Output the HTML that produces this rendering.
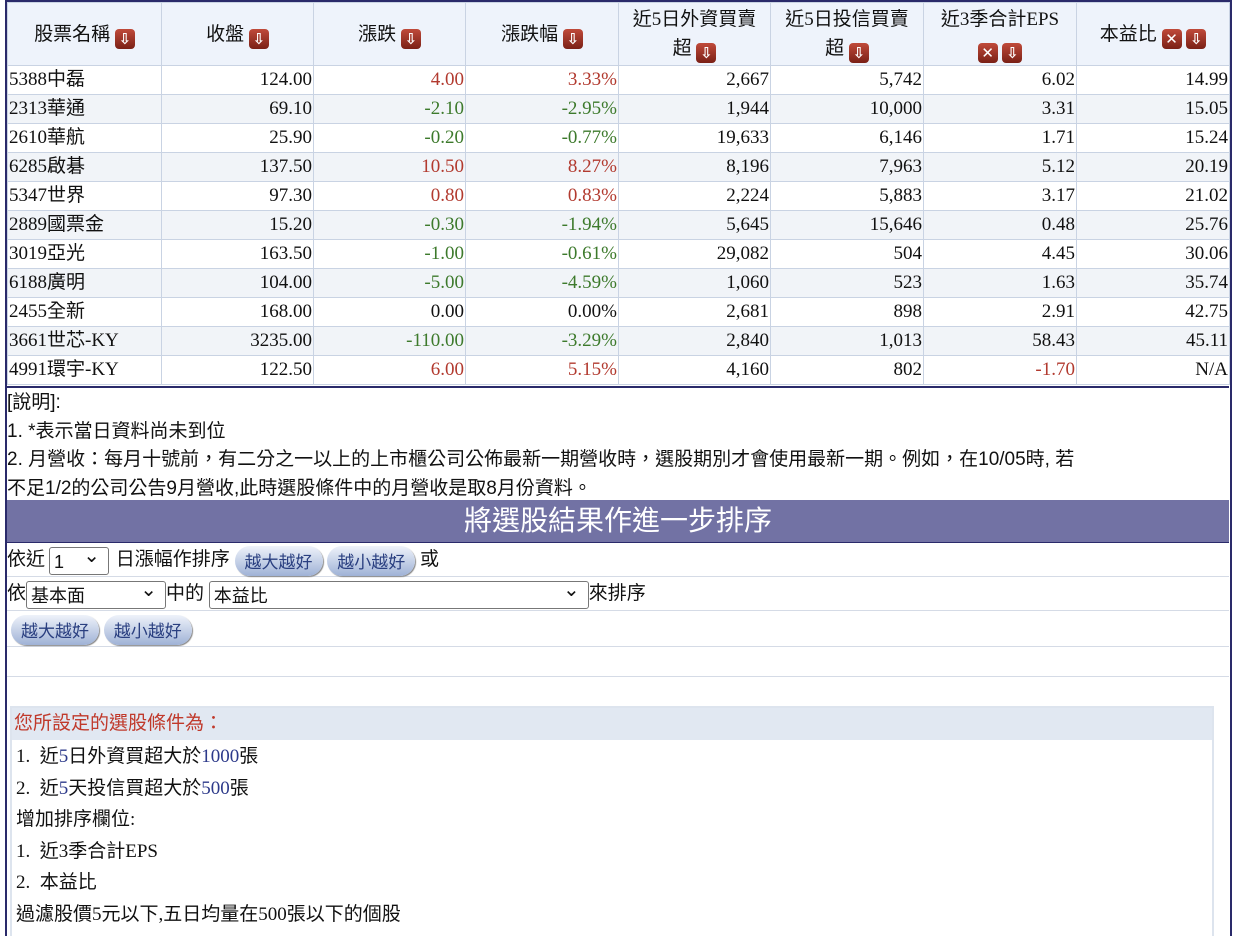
<!DOCTYPE html>
<html><head><meta charset="utf-8"><style>
body{margin:0;width:1234px;height:934px;overflow:hidden;background:#fff;font-family:"Liberation Serif","Noto Sans CJK TC",serif;font-size:18px;color:#111;}
.wrap{position:absolute;left:5px;top:0;width:1223px;height:934px;border-left:2px solid #2a2a6a;border-right:2px solid #2a2a6a;border-top:2px solid #2a2a6a;}
table.d{position:absolute;left:7px;top:2px;border-collapse:collapse;width:1222px;table-layout:fixed;}
table.d td{border:1px solid #c9d3e3;height:28px;padding:0 1px;text-align:right;white-space:nowrap;line-height:28px;font-size:19px;}
table.d th{font-weight:normal;background:#eef3fb;border:1px solid #c9d3e3;height:60px;text-align:center;line-height:29px;font-size:19px;}
table.d tr:nth-child(odd) td{background:#f1f4f8;}
table.d td.n{text-align:left;color:#111;}
.r{color:#b23a2f}.g{color:#3d7a2c}
.ic{display:inline-block;width:20px;height:20px;border-radius:4px;background:linear-gradient(#c04a3a,#7a2016);color:#fff;font-size:15px;line-height:20px;text-align:center;vertical-align:-4px;font-family:"DejaVu Sans",sans-serif;font-weight:bold;}
.line{position:absolute;left:7px;width:1222px;}
.bar{position:absolute;left:7px;top:500px;width:1222px;height:42px;background:#7272a4;color:#fff;text-align:center;font-size:28px;line-height:42px;font-family:"Liberation Sans","Noto Sans CJK TC",sans-serif;border-bottom:1px solid #2a2a6a;}
.row{position:absolute;left:7px;width:1222px;border-bottom:1px solid #d5dbe6;font-size:19px;}
.sel{display:inline-block;border:1px solid #777;border-radius:3px;height:28px;vertical-align:middle;background:#fff;font-family:"Liberation Sans","Noto Sans CJK TC",sans-serif;font-size:18px;line-height:28px;padding-left:4px;box-sizing:border-box;position:relative;}
.sel:after{content:"⌄";position:absolute;right:8px;top:-6px;font-size:20px;}
.btn{display:inline-block;height:30px;padding:0 10px;border-radius:15px;background:linear-gradient(#eef2fa,#9fb2d6);color:#2a3f80;font-size:17px;line-height:30px;vertical-align:middle;box-shadow:1px 1px 1px #888;font-family:"Noto Sans CJK TC",sans-serif;}
.cond{position:absolute;left:10px;top:706px;width:1200px;height:228px;border:2px solid #dde4ee;border-bottom:none;font-size:19px;}
.cond .h{background:#e1e8f2;height:32px;line-height:32px;color:#c0392b;padding-left:2px;}
.cond div.l{height:31.5px;line-height:33px;padding-left:4px;}
.b{color:#2d3a8a}
</style></head><body>
<div class="wrap"></div>
<table class="d">
<colgroup><col style="width:154px"><col style="width:152px"><col style="width:152px"><col style="width:153px"><col style="width:152px"><col style="width:153px"><col style="width:153px"><col style="width:153px"></colgroup>
<tr><th>股票名稱 <span class="ic">⇩</span></th><th>收盤 <span class="ic">⇩</span></th><th>漲跌 <span class="ic">⇩</span></th><th>漲跌幅 <span class="ic">⇩</span></th><th>近5日外資買賣<br>超 <span class="ic">⇩</span></th><th>近5日投信買賣<br>超 <span class="ic">⇩</span></th><th>近3季合計EPS<br><span class="ic">✕</span> <span class="ic">⇩</span></th><th>本益比 <span class="ic">✕</span> <span class="ic">⇩</span></th></tr>
<tr><td class="n">5388中磊</td><td>124.00</td><td class="r">4.00</td><td class="r">3.33%</td><td>2,667</td><td>5,742</td><td>6.02</td><td>14.99</td></tr>
<tr><td class="n">2313華通</td><td>69.10</td><td class="g">-2.10</td><td class="g">-2.95%</td><td>1,944</td><td>10,000</td><td>3.31</td><td>15.05</td></tr>
<tr><td class="n">2610華航</td><td>25.90</td><td class="g">-0.20</td><td class="g">-0.77%</td><td>19,633</td><td>6,146</td><td>1.71</td><td>15.24</td></tr>
<tr><td class="n">6285啟碁</td><td>137.50</td><td class="r">10.50</td><td class="r">8.27%</td><td>8,196</td><td>7,963</td><td>5.12</td><td>20.19</td></tr>
<tr><td class="n">5347世界</td><td>97.30</td><td class="r">0.80</td><td class="r">0.83%</td><td>2,224</td><td>5,883</td><td>3.17</td><td>21.02</td></tr>
<tr><td class="n">2889國票金</td><td>15.20</td><td class="g">-0.30</td><td class="g">-1.94%</td><td>5,645</td><td>15,646</td><td>0.48</td><td>25.76</td></tr>
<tr><td class="n">3019亞光</td><td>163.50</td><td class="g">-1.00</td><td class="g">-0.61%</td><td>29,082</td><td>504</td><td>4.45</td><td>30.06</td></tr>
<tr><td class="n">6188廣明</td><td>104.00</td><td class="g">-5.00</td><td class="g">-4.59%</td><td>1,060</td><td>523</td><td>1.63</td><td>35.74</td></tr>
<tr><td class="n">2455全新</td><td>168.00</td><td>0.00</td><td>0.00%</td><td>2,681</td><td>898</td><td>2.91</td><td>42.75</td></tr>
<tr><td class="n">3661世芯-KY</td><td>3235.00</td><td class="g">-110.00</td><td class="g">-3.29%</td><td>2,840</td><td>1,013</td><td>58.43</td><td>45.11</td></tr>
<tr><td class="n">4991環宇-KY</td><td>122.50</td><td class="r">6.00</td><td class="r">5.15%</td><td>4,160</td><td>802</td><td class="r">-1.70</td><td>N/A</td></tr>
</table>
<div class="line" style="top:386px;border-top:2px solid #2a2a6a;"></div>
<div class="line" style="top:389px;line-height:28.5px;font-size:19px;font-family:'Liberation Sans','Noto Sans CJK TC',sans-serif;">[說明]:<br>1. *表示當日資料尚未到位<br>2. 月營收：每月十號前，有二分之一以上的上市櫃公司公佈最新一期營收時，選股期別才會使用最新一期。例如，在10/05時, 若<br>不足1/2的公司公告9月營收,此時選股條件中的月營收是取8月份資料。</div>
<div class="bar">將選股結果作進一步排序</div>
<div class="row" style="top:543px;height:33px;line-height:33px;">依近<span class="sel" style="width:60px;margin:0 2px 0 4px">1</span> 日漲幅作排序 <span class="btn">越大越好</span> <span class="btn">越小越好</span> 或</div>
<div class="row" style="top:577px;height:33px;line-height:33px;">依<span class="sel" style="width:140px">基本面</span>中的 <span class="sel" style="width:380px">本益比</span>來排序</div>
<div class="row" style="top:611px;height:36px;line-height:36px;padding-left:4px;box-sizing:border-box;"><span class="btn">越大越好</span> <span class="btn">越小越好</span></div>
<div class="row" style="top:648px;height:28px;"></div>
<div class="cond">
<div class="h">您所設定的選股條件為：</div>
<div class="l">1.&nbsp; 近<span class="b">5</span>日外資買超大於<span class="b">1000</span>張</div>
<div class="l">2.&nbsp; 近<span class="b">5</span>天投信買超大於<span class="b">500</span>張</div>
<div class="l">增加排序欄位:</div>
<div class="l">1.&nbsp; 近3季合計EPS</div>
<div class="l">2.&nbsp; 本益比</div>
<div class="l">過濾股價5元以下,五日均量在500張以下的個股</div>
</div>
</body></html>
